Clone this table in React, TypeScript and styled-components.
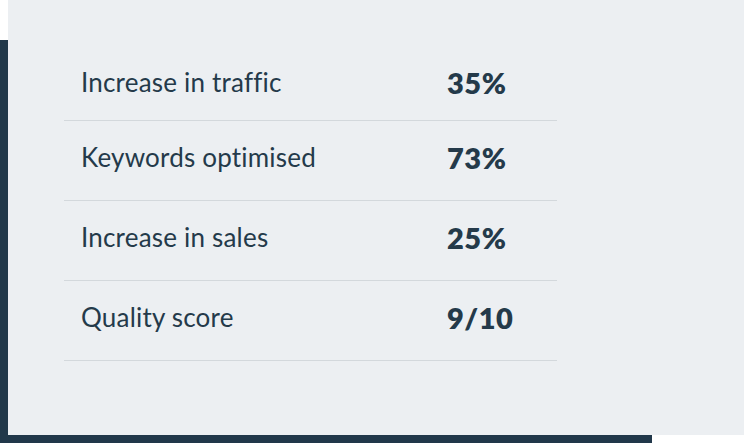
import React from 'react';
import styled, { createGlobalStyle } from 'styled-components';

const GlobalStyle = createGlobalStyle`
  html, body {
    margin: 0;
    padding: 0;
    background: #ffffff;
    overflow: hidden;
  }
`;

interface Stat {
  label: string;
  value: string;
}

const stats: Stat[] = [
  { label: 'Increase in traffic', value: '35%' },
  { label: 'Keywords optimised', value: '73%' },
  { label: 'Increase in sales', value: '25%' },
  { label: 'Quality score', value: '9/10' },
];

const App: React.FC = () => {
  return (
    <>
      <GlobalStyle />
      <StyledStage>
        <StyledPanel>
          <StyledTable>
            {stats.map((stat, i) => (
              <StyledRow key={stat.label} first={i === 0}>
                <StyledLabel>{stat.label}</StyledLabel>
                <StyledValue>{stat.value}</StyledValue>
              </StyledRow>
            ))}
          </StyledTable>
        </StyledPanel>
      </StyledStage>
    </>
  );
};

const StyledStage = styled.div`
  position: relative;
  width: 744px;
  height: 443px;
  padding: 0 0 8px 8px;
  box-sizing: border-box;

  &::before {
    content: '';
    position: absolute;
    left: 0;
    top: 40px;
    width: 652px;
    bottom: 0;
    background: #21384a;
  }
`;

const StyledPanel = styled.div`
  position: relative;
  height: 100%;
  background: #eceff2;
  padding: 46px 0 0 56px;
  box-sizing: border-box;
`;

const StyledTable = styled.div`
  width: 493px;
  display: flex;
  flex-direction: column;
`;

const StyledRow = styled.div<{ first?: boolean }>`
  display: grid;
  grid-template-columns: 383px 1fr;
  align-items: center;
  height: ${(p) => (p.first ? 75 : 80)}px;
  padding-bottom: ${(p) => (p.first ? 2 : 7)}px;
  box-sizing: border-box;
  border-bottom: 1px solid #d3d8dc;
`;

const StyledLabel = styled.div`
  padding-left: 17px;
  font-family: Lato, 'Noto Sans', sans-serif;
  font-size: 26px;
  font-weight: 400;
  color: #243a4a;
  letter-spacing: 0.2px;
`;

const StyledValue = styled.div`
  font-family: Lato, 'Noto Sans', sans-serif;
  font-size: 29px;
  font-weight: 800;
  color: #243a4a;
  letter-spacing: 0.5px;
`;

export default App;
